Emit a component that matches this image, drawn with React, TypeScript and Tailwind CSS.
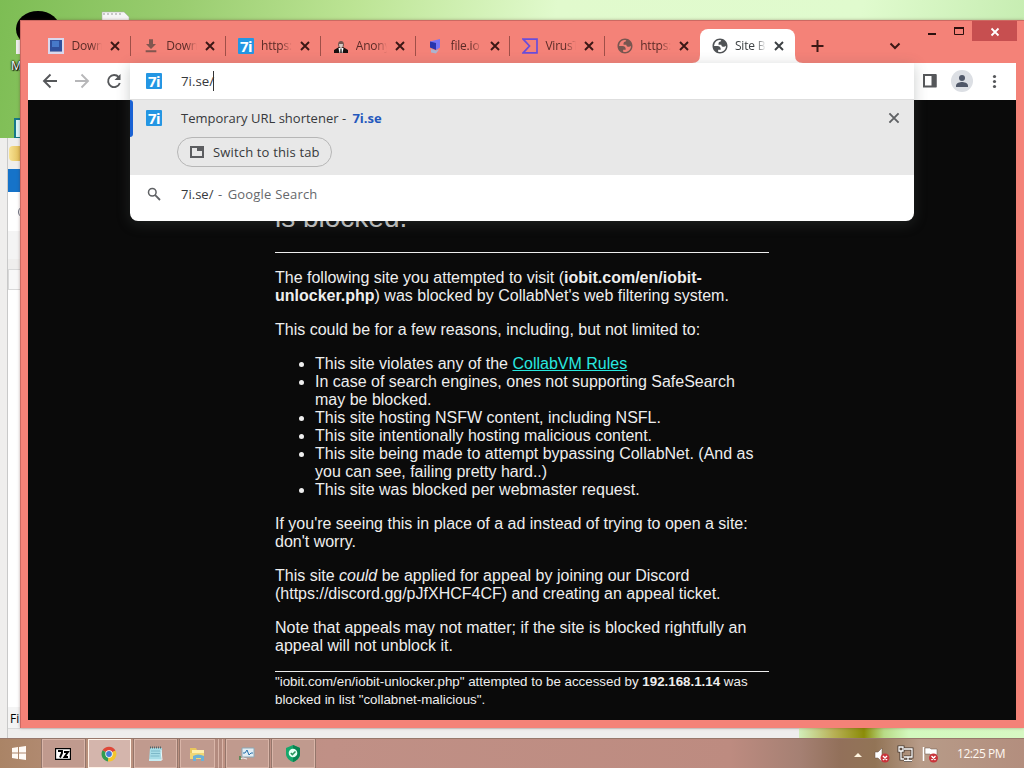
import React from "react";
import type { ReactNode } from "react";

const ui = "font-['Open_Sans','Noto_Sans',sans-serif]";

function Cross({ className = "", large }: { className?: string; large?: boolean }) {
  return (
    <svg width="16" height="16" viewBox="0 0 16 16" className={`shrink-0 ${className}`}>
      <path d={large ? "M3.400 3.400 L12.600 12.600 M12.600 3.400 L3.400 12.600" : "M4 4 L12 12 M12 4 L4 12"} stroke="currentColor" strokeWidth="1.900" fill="none" />
    </svg>
  );
}

function SevenI() {
  return (
    <span className="flex h-4 w-4 shrink-0 items-center justify-center rounded-[1px] bg-[#2496e3] font-['Noto_Sans','Open_Sans',sans-serif] text-[15px] leading-none font-bold tracking-[-0.5px] text-white">
      7i
    </span>
  );
}

function Globe({ color }: { color: string }) {
  return (
    <svg width="18" height="18" viewBox="0 0 24 24" className="-mx-px shrink-0" fill={color}>
      <path d="M12 2C6.48 2 2 6.48 2 12s4.48 10 10 10 10-4.48 10-10S17.52 2 12 2zM4 12h4.4c3.407.022 4.922 1.73 4.543 5.127H9.488v2.47a8.004 8.004 0 0 0 10.498-8.083C19.327 12.504 18.332 13 17 13c-2.137 0-3.206-.916-3.206-2.750h-3.748c-.274-2.728.683-4.092 2.870-4.092 0-.975.327-1.597.811-1.970A8.004 8.004 0 0 0 4 12z" fillRule="evenodd" />
    </svg>
  );
}

const PhotoIcon = () => (
  <svg width="16" height="16" viewBox="0 0 16 16" className="shrink-0">
    <path d="M0 0h16v16H0z" fill="#d9d8ee" />
    <path d="M2 2h12v11H2z" fill="#304f9c" />
    <path d="M4 3h7v6H4z" fill="#4779c9" />
    <path d="M2 13h12v1H2z" fill="#7e8bb8" />
  </svg>
);
const DownloadIcon = () => (
  <svg width="16" height="16" viewBox="0 0 24 24" className="shrink-0" fill="#80564f">
    <path d="M19.500 9h-4.500V2H9v7H4.500l7.500 7.500z M4 18.500h16v3H4z" />
  </svg>
);
const SuitIcon = () => (
  <svg width="16" height="16" viewBox="0 0 16 16" className="shrink-0">
    <path d="M5 7 Q5 3 8 3 Q11 3 11 7 L10 10 H6z" fill="#72554f" />
    <path d="M6 6h4l-.5 3-1.500 1-1.500-1z" fill="#d7c9c4" />
    <path d="M1 15v-3l5-3 2 2 2-2 5 3v3z" fill="#17100f" />
    <path d="M5.500 10h5L9.500 15h-3z" fill="#fff" />
    <path d="M7.500 10.500h1l.3 4.500H7.200z" fill="#222" />
  </svg>
);
const FileIcon = () => (
  <svg width="16" height="16" viewBox="0 0 16 16" className="shrink-0">
    <path d="M2 3.500L12 1v8.500L8 12z" fill="#7774f3" />
    <path d="M2 3.500L8 5v7l-6-2.500z" fill="#2734ad" />
    <path d="M3 11l5 1.500 3-1-3 4-5-1z" fill="#acb4d0" />
  </svg>
);
const VirusIcon = () => (
  <svg width="16" height="16" viewBox="0 0 16 16" className="shrink-0">
    <path d="M1.200 1.200H15V14.800H1.200L7.500 8z" stroke="#694ddb" strokeWidth="1.700" fill="none" />
  </svg>
);

function Tab({ icon, label, active, divider }: { icon: ReactNode; label: string; active?: boolean; divider?: boolean }) {
  return (
    <div className={`relative flex h-[34px] w-[94.8px] shrink-0 items-center pl-3 ${active ? "rounded-t-lg bg-white text-[#3c4043]" : "text-[#5b2b27]"}`}>
      {active && (
        <>
          <svg width="8" height="8" className="absolute bottom-0 -left-2"><path d="M8 0v8H0Q8 8 8 0" fill="#fff" /></svg>
          <svg width="8" height="8" className="absolute -right-2 bottom-0"><path d="M0 0v8h8Q0 8 0 0" fill="#fff" /></svg>
        </>
      )}
      {icon}
      <span className={`ml-[7px] w-[31px] overflow-hidden text-[12px] tracking-[-0.2px] whitespace-nowrap [mask-image:linear-gradient(to_right,black_65%,transparent)] ${ui}`}>{label}</span>
      <Cross className={active ? "ml-[5px] text-[#3c4043]" : "ml-[5px] text-[#3b1715]"} />
      {divider && <span className="absolute top-[7px] right-0 h-5 w-px bg-[#9f4f48]" />}
    </div>
  );
}

function WindowButtons() {
  return (
    <div className="-mr-px ml-auto flex h-[21px] text-[#2b100e]">
      <svg width="54" height="20" viewBox="0 0 54 20">
        <path d="M10 13h8" stroke="currentColor" strokeWidth="2" />
        <path d="M36.500 7.500h9v6h-9z" stroke="currentColor" strokeWidth="1" fill="none" />
        <path d="M36 7h10" stroke="currentColor" strokeWidth="2" />
      </svg>
      <div className="flex h-5 w-[45px] items-center justify-center bg-[#c74f50] text-white">
        <svg width="10" height="10" viewBox="0 0 10 10" className="mt-px"><path d="M1.500 1.500l7 7M8.500 1.500l-7 7" stroke="#fff" strokeWidth="1.800" /></svg>
      </div>
    </div>
  );
}

function BackgroundWindow() {
  return (
    <div className="absolute top-[138px] left-0 flex h-[600px] w-[799px] bg-[#efeeed]">
      <div className="ml-[7px] flex w-[792px] flex-col border-l border-[#c9c9c9]">
        <div className="flex h-[31px] items-center">
          <div className="ml-px h-[15px] w-4 rounded-sm bg-gradient-to-r from-[#f8e394] to-[#d7ad38]" />
        </div>
        <div className="h-[23px] bg-[#1673c9]" />
        <div className="flex h-[39px] items-center bg-white pl-[10px]"><span className="h-3 w-3 rounded-full border border-gray-500" /></div>
        <div className="h-7 bg-[#f4f4f4]" />
        <div className="mt-2.5 h-[21px] border border-[#d8d8d8] bg-[#f8f8f8]" />
        <div className="h-[417px] bg-white" />
        <div className={`flex h-[22px] items-center border-b border-[#dadada] bg-[#f4f4f4] pt-[3px] pl-[2px] text-[12px] text-black ${ui}`}>Fi</div>
      </div>
    </div>
  );
}

function Toolbar() {
  return (
    <div className="flex h-[37px] w-[988px] items-center bg-white text-[#55575a]">
      <svg width="102" height="36" viewBox="0 0 102 36" className="-mt-px" fill="none" stroke="currentColor" strokeWidth="1.900">
        <path d="M29 18H16M22.500 11.500L16 18l6.500 6.500" />
        <path d="M47 18h13M53.500 11.500L60 18l-6.500 6.500" stroke="#b7b7b9" />
        <path d="M90.700 14.200A6 6 0 1 0 91.800 20" />
        <path d="M92.500 11v6h-6z" fill="currentColor" stroke="none" />
      </svg>
      <svg width="100" height="36" viewBox="0 0 100 36" className="-mt-px ml-auto">
        <path d="M8 12h11.500v11.500H8z" fill="none" stroke="#55575a" strokeWidth="2" />
        <path d="M15.500 12h5v12h-5z" fill="#55575a" />
        <circle cx="46" cy="18" r="11" fill="#dcdfe4" />
        <circle cx="46" cy="15" r="3" fill="#505869" />
        <path d="M40 24v-1.500c0-2.500 4-3.500 6-3.500s6 1 6 3.500V24z" fill="#505869" />
        <g fill="#55575a"><circle cx="78.500" cy="13.500" r="1.600" /><circle cx="78.500" cy="18.500" r="1.600" /><circle cx="78.500" cy="23.500" r="1.600" /></g>
      </svg>
    </div>
  );
}

function Suggestions() {
  return (
    <div className={`absolute top-[63px] left-[130px] flex h-[158px] w-[784px] flex-col overflow-hidden rounded-b-lg bg-white text-[13px] text-[#37393c] shadow-[0_3px_14px_rgba(80,90,85,0.3)] ${ui}`}>
      <div className="flex h-9 shrink-0 items-center pl-4">
        <SevenI />
        <span className="ml-[19px] pt-0.5 text-[13.3px]">7i.se/</span>
        <span className="-ml-px h-5 w-px bg-[#333]" />
      </div>
      <div className="flex h-[76px] shrink-0 flex-col border-t border-[#dedede] bg-[#e8e8e8]">
        <div className="flex h-[37px] items-center">
          <span className="h-full w-[3px] rounded-r-sm bg-[#1a62d4]" />
          <span className="-mt-px ml-[13px] flex"><SevenI /></span>
          <span className="ml-[19px] whitespace-pre">Temporary URL shortener <span className="tracking-[1px]">- </span><b className="ml-px text-[#2458bd]">7i.se</b></span>
          <Cross large className="-mt-px mr-3 ml-auto text-[#5f6164]" />
        </div>
        <div className="ml-[47px] flex h-[30px] w-[155px] items-center rounded-full border border-[#b6b6b6] pl-3">
          <svg width="14" height="12" viewBox="0 0 14 12"><path d="M1 1h12v10H1z" fill="none" stroke="#5c5d60" strokeWidth="2" /><path d="M7 1h6v4H7z" fill="#5c5d60" /></svg>
          <span className="ml-[9px] pt-0.5 tracking-[0.16px] whitespace-nowrap">Switch to this tab</span>
        </div>
      </div>
      <div className="flex h-[38px] items-center pl-[17px]">
        <svg width="14" height="14" viewBox="0 0 14 14" fill="none" stroke="#5f6164"><circle cx="5.300" cy="5.300" r="3.800" strokeWidth="1.500" /><path d="M8.200 8.200L13 13" strokeWidth="1.800" /></svg>
        <span className="ml-5 pt-0.5 whitespace-pre">7i.se/<span className="text-[#66686b]"><span className="tracking-[1.1px]"> - </span><span className="tracking-[0.2px]">Google Search</span></span></span>
      </div>
    </div>
  );
}

function BlockedPage() {
  return (
    <main className="h-[620px] w-[988px] overflow-hidden bg-[#0a0a0a] pt-[102px] pl-[247px] font-['Liberation_Sans',Arial,sans-serif] text-[16px] leading-[18px] text-[#eeeeee]">
      <div className="w-[494px]">
        <h1 className="h-8 text-[28px] leading-8 text-[#c9c9c9]">is blocked.</h1>
        <hr className="mt-[18px] border-[#eeeeee]" />
        <p className="mt-4">The following site you attempted to visit (<b>iobit.com/en/iobit-<br />unlocker.php</b>) was blocked by CollabNet's web filtering system.</p>
        <p className="mt-4">This could be for a few reasons, including, but not limited to:</p>
        <ul className="mt-4 list-disc pl-10">
          <li>This site violates any of the <a className="text-[#28e8e0] underline">CollabVM Rules</a></li>
          <li>In case of search engines, ones not supporting SafeSearch<br />may be blocked.</li>
          <li>This site hosting NSFW content, including NSFL.</li>
          <li>This site intentionally hosting malicious content.</li>
          <li>This site being made to attempt bypassing CollabNet. (And as<br />you can see, failing pretty hard..)</li>
          <li>This site was blocked per webmaster request.</li>
        </ul>
        <p className="mt-4">If you're seeing this in place of a ad instead of trying to open a site:<br />don't worry.</p>
        <p className="mt-4">This site <i>could</i> be applied for appeal by joining our Discord<br />(https://discord.gg/pJfXHCF4CF) and creating an appeal ticket.</p>
        <p className="mt-4">Note that appeals may not matter; if the site is blocked rightfully an<br />appeal will not unblock it.</p>
        <hr className="mt-4 border-[#eeeeee]" />
        <p className="pt-px text-[13.333px] whitespace-nowrap">"iobit.com/en/iobit-unlocker.php" attempted to be accessed by <b>192.168.1.14</b> was<br />blocked in list "collabnet-malicious".</p>
      </div>
    </main>
  );
}

function TaskButton({ children, active }: { children: ReactNode; active?: boolean }) {
  return (
    <div className={`flex h-[29px] w-[43px] shrink-0 items-center justify-center border pr-px ${active ? "border-[#fff3e8] bg-[#d4b5ac]" : "border-[#d9b5a8] bg-[#c09a8e] outline outline-[#94766b]"}`}>
      {children}
    </div>
  );
}

function Taskbar() {
  return (
    <div className="absolute top-[738px] left-0 flex h-[30px] w-[1024px] items-center border-t border-[#98786b] bg-[linear-gradient(to_right,#aa8466_0,#b9917d_100px,#c09086_330px,#bd8b80_730px,#a58073_800px,#92705a_840px,#927456_875px,#b79b88_920px,#b38e7e_1024px)]">
      <svg width="14" height="14" viewBox="0 0 14 14" className="-mt-0.5 ml-3" fill="#fffaf5"><path d="M0 2l6-.9v5.400H0zM7 1l7-1v6.500H7zM0 7.500h6v5.400L0 12zM7 7.500h7V14l-7-1z" /></svg>
      <div className="ml-4 flex gap-[3px]">
        <TaskButton>
          <svg width="16" height="12" viewBox="0 0 16 12"><path d="M.5.5h15v11H.5z" fill="#fff" stroke="#000" strokeWidth="1.300" /><path d="M3 3h4v2L5 9.500M9 4h4L9.500 9H13" fill="none" stroke="#000" strokeWidth="1.900" /></svg>
        </TaskButton>
        <TaskButton active>
          <svg width="16" height="16" viewBox="0 0 16 16">
            <path d="M8 8L1.500 4.300A7.500 7.500 0 0 1 14.500 4.500z" fill="#df4738" />
            <path d="M8 8L1.500 4.300A7.500 7.500 0 0 0 7 15.400z" fill="#319c50" />
            <path d="M8 8l6.500-3.500A7.500 7.500 0 0 1 7 15.400z" fill="#f3c52e" />
            <circle cx="8" cy="8" r="3.700" fill="#fff" /><circle cx="8" cy="8" r="2.900" fill="#427bd4" />
          </svg>
        </TaskButton>
        <TaskButton>
          <svg width="16" height="16" viewBox="0 0 16 16" className="ml-0.5"><path d="M2 2h12l-1 13H1z" fill="#a6dce6" /><path d="M3 5h10M3 7.500h9M2.500 10h9" stroke="#7cb8c8" /><path d="M2 1.500h12" stroke="#50666b" strokeWidth="2" strokeDasharray="1 1" /><path d="M13 4l1 10H1" fill="none" stroke="#e8fbff" /></svg>
        </TaskButton>
        <div className="flex">
          <div className="flex h-[29px] w-[35px] items-center justify-center border border-[#d9b5a8] bg-[#c09a8e] outline outline-[#94766b]">
            <svg width="17" height="16" viewBox="0 0 17 16"><path d="M1 2h6l1 2h7v9H1z" fill="#e9c65c" /><path d="M3 4h12v4H3z" fill="#fff0ac" /><path d="M1 7h14v6H1z" fill="#f1d774" /><path d="M4 15V10q5-3 11 0v5h-3v-3H7v3z" fill="#6eb1d5" /></svg>
          </div>
          <div className="h-[29px] w-[4px] border-r border-[#d9b5a8] bg-[#b38b7f]" />
          <div className="h-[29px] w-[4px] border-r border-[#d9b5a8] bg-[#b38b7f]" />
        </div>
        <TaskButton>
          <svg width="16" height="16" viewBox="0 0 16 16"><path d="M3 2h12v9H3z" fill="#e1edf4" stroke="#8ca8b5" /><path d="M4 7h2l2-3 2 5 2-2h2" fill="none" stroke="#2870aa" /><path d="M1 13l3-1 4 1" stroke="#eee" fill="none" /><path d="M1 10v4" stroke="#41834a" strokeWidth="1.500" /></svg>
        </TaskButton>
        <TaskButton>
          <svg width="16" height="17" viewBox="0 0 16 17"><path d="M8 0l7 3v6c0 4-4 7-7 8-3-1-7-4-7-8V3z" fill="#16a86b" /><path d="M8 0l7 3v6c0 4-4 7-7 8z" fill="#088451" /><circle cx="8" cy="8" r="4.300" fill="#e5fff3" /><path d="M5.800 8l1.600 1.600L10.500 6.500" stroke="#27945b" strokeWidth="1.500" fill="none" /></svg>
        </TaskButton>
      </div>
      <svg width="94" height="24" viewBox="0 0 94 24" className="mt-0.5 ml-auto">
        <path d="M5 14l4-4 4 4z" fill="#fff5df" />
        <path d="M26 9h3l4-4v14l-4-4h-3z" fill="#fff" stroke="#665047" strokeWidth=".5" />
        <path d="M55 6h8v8H55M59 14v3M55 17.500h8M50 4h4v4h-4zM52 8v8h3" fill="none" stroke="#443830" strokeWidth="3" />
        <path d="M55 6h8v8H55M59 14v3M55 17.500h8M50 4h4v4h-4zM52 8v8h3" fill="none" stroke="#fff" strokeWidth="1.300" />
        <path d="M74.500 4v14" stroke="#fff" strokeWidth="1.500" /><path d="M76 5h5l1 1h6v6h-6l-1-1h-5z" fill="#fff" stroke="#665047" strokeWidth=".5" />
        <g fill="#c9343b"><circle cx="36" cy="15" r="4.500" /><circle cx="84.500" cy="15" r="4.500" /></g>
        <path d="M34 13l4 4m0-4l-4 4M82.500 13l4 4m0-4l-4 4" stroke="#fff" strokeWidth="1.400" />
      </svg>
      <span className={`mr-[18px] ml-[14px] w-[49px] text-[12px] tracking-[-0.45px] whitespace-nowrap text-[#fff8f1] ${ui}`}>12:25 PM</span>
    </div>
  );
}

export default function App() {
  return (
    <div className="relative h-[768px] w-[1024px] overflow-hidden bg-[linear-gradient(100deg,#7dbd54_0,#9acd70_180px,#bce494_350px,#e1facd_550px,#e0fbce_850px,#c5ecb0_1024px)]">
      <svg width="130" height="138" viewBox="0 0 130 138" className="absolute top-0 left-0">
        <ellipse cx="38" cy="29" rx="22" ry="18" fill="#000" />
        <path d="M16 40h5v14h-5z" fill="#eee" />
        <path d="M102 12h22l5 5v8h-27z" fill="#f5f5f5" stroke="#aaa" strokeWidth=".5" />
        <path d="M103 14h20" stroke="#999" strokeDasharray="2 2" />
        <path d="M15 119h7v19h-7z" fill="#d9f5f7" stroke="#167888" strokeWidth="2" />
      </svg>
      <span className={`absolute top-[57px] left-[11px] text-[12px] text-white [text-shadow:1px_1px_1px_black,0_0_2px_black,0_0_2px_black] ${ui}`}>M</span>
      <BackgroundWindow />
      <div className="absolute top-[728px] left-[799px] h-[10px] w-[225px] bg-[linear-gradient(to_right,#d2efba,#b8b055_35px,#8b8c08_65px,#b8db87_85px,#d3f9be_110px,#d7f8c3)]" />
      <div className="absolute top-5 left-5 flex h-[708px] w-[1004px] flex-col border-t border-l border-[#cc6962] bg-[#f48278] pr-2 pl-[7px] shadow-[0_0_3px_rgba(80,30,20,0.35)]">
        <div className="flex h-[42px] items-start pl-[8.4px]">
          <div className="mt-2 flex items-center">
            <Tab icon={<PhotoIcon />} label="Downloads" divider />
            <Tab icon={<DownloadIcon />} label="Downloads" divider />
            <Tab icon={<SevenI />} label="https://7i.se" divider />
            <Tab icon={<SuitIcon />} label="Anonymous" divider />
            <Tab icon={<FileIcon />} label="file.io" divider />
            <Tab icon={<VirusIcon />} label="VirusTotal" divider />
            <Tab icon={<Globe color="#785650" />} label="https://iobit" />
            <Tab icon={<Globe color="#505356" />} label="Site Blocked" active />
            <svg width="111" height="30" viewBox="0 0 111 30" className="text-[#3c1815]"><path d="M16.500 15h12M22.500 9v12" stroke="currentColor" strokeWidth="2" /><path d="M95.500 12.500l4.500 4.500 4.500-4.500" fill="none" stroke="currentColor" strokeWidth="2" /></svg>
          </div>
          <WindowButtons />
        </div>
        <Toolbar />
        <BlockedPage />
      </div>
      <Suggestions />
      <Taskbar />
    </div>
  );
}
